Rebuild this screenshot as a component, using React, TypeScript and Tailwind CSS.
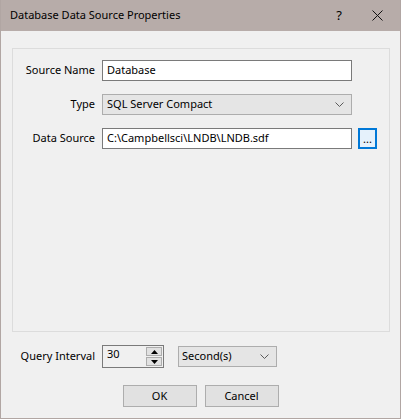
import type { ReactNode } from "react";

function Label({ children }: { children: ReactNode }) {
  return <div className="w-[89px] shrink-0 whitespace-nowrap pr-[7px] text-right">{children}</div>;
}

function Chevron() {
  return (
    <svg width="9" height="5" viewBox="0 0 9 5" className="shrink-0">
      <path d="M0.5 0.5 L4.5 4.5 L8.5 0.5" fill="none" stroke="#5a5a5a" strokeWidth="1" />
    </svg>
  );
}

function Triangle({ up }: { up?: boolean }) {
  return (
    <svg width="7" height="4" viewBox="0 0 7 4">
      <path d={up ? "M0 4 L3.5 0 L7 4 Z" : "M0 0 L3.5 4 L7 0 Z"} fill="#000" />
    </svg>
  );
}

export default function App() {
  return (
    <div
      className="flex h-[419px] w-[401px] flex-col border border-t-0 border-[#b1a6a3] bg-[#f0f0f0] text-[11px] text-black"
      style={{ fontFamily: '"Noto Sans", "Open Sans", sans-serif' }}
    >
      <header className="flex h-[31px] shrink-0 items-center bg-[#b7aca9] pl-[9px]">
        <h1 className="flex-1 text-[11px] font-normal">Database Data Source Properties</h1>
        <div className="w-[30px] text-center text-[13px]">?</div>
        <div className="flex w-[46px] items-center justify-center">
          <svg width="11" height="11" viewBox="0 0 11 11">
            <path d="M0.5 0.5 L10.5 10.5 M10.5 0.5 L0.5 10.5" stroke="#111" strokeWidth="1" />
          </svg>
        </div>
      </header>

      <div className="ml-[11px] mt-[17px] flex h-[284px] w-[378px] flex-col gap-[13px] border border-[#dcdcdc] pt-[11px]">
        <div className="flex h-[21px] items-center">
          <Label>Source Name</Label>
          <div className="flex h-[21px] w-[250px] items-center border border-[#7a7a7a] bg-white px-[4px]">
            Database
          </div>
        </div>
        <div className="flex h-[21px] items-center">
          <Label>Type</Label>
          <div className="flex h-[21px] w-[250px] items-center justify-between border border-[#adadad] bg-[#e5e5e5] pl-[4px] pr-[7px]">
            <span>SQL Server Compact</span>
            <Chevron />
          </div>
        </div>
        <div className="flex h-[21px] items-center">
          <Label>Data Source</Label>
          <div className="flex h-[21px] w-[250px] items-center border border-[#7a7a7a] bg-white px-[4px]">
            C:\Campbellsci\LNDB\LNDB.sdf
          </div>
          <button className="ml-[6px] flex h-[21px] w-[19px] items-end justify-center border-2 border-[#0078d7] bg-[#e5f1fb] pb-[3px] text-[11px] leading-none">
            ...
          </button>
        </div>
      </div>

      <div className="mt-[13px] flex h-[23px] items-center">
        <div className="w-[101px] shrink-0 whitespace-nowrap pr-[7px] text-right">Query Interval</div>
        <div className="flex h-[23px] w-[62px] border border-[#7a7a7a] bg-[#f0f0f0]">
          <div className="flex-1 pl-[4px] leading-[16px]">30</div>
          <div className="flex w-[17px] flex-col gap-px py-px pr-px">
            <div className="flex flex-1 items-center justify-center border border-[#adadad] bg-[#e1e1e1]">
              <Triangle up />
            </div>
            <div className="flex flex-1 items-center justify-center border border-[#adadad] bg-[#e1e1e1]">
              <Triangle />
            </div>
          </div>
        </div>
        <div className="ml-[14px] flex h-[21px] w-[99px] items-center justify-between border border-[#adadad] bg-[#e5e5e5] pl-[3px] pr-[7px]">
          <span>Second(s)</span>
          <Chevron />
        </div>
      </div>

      <div className="mt-[17px] flex justify-center gap-[8px]">
        <button className="h-[22px] w-[74px] border border-[#adadad] bg-[#e1e1e1]">OK</button>
        <button className="h-[22px] w-[74px] border border-[#adadad] bg-[#e1e1e1]">Cancel</button>
      </div>
    </div>
  );
}
